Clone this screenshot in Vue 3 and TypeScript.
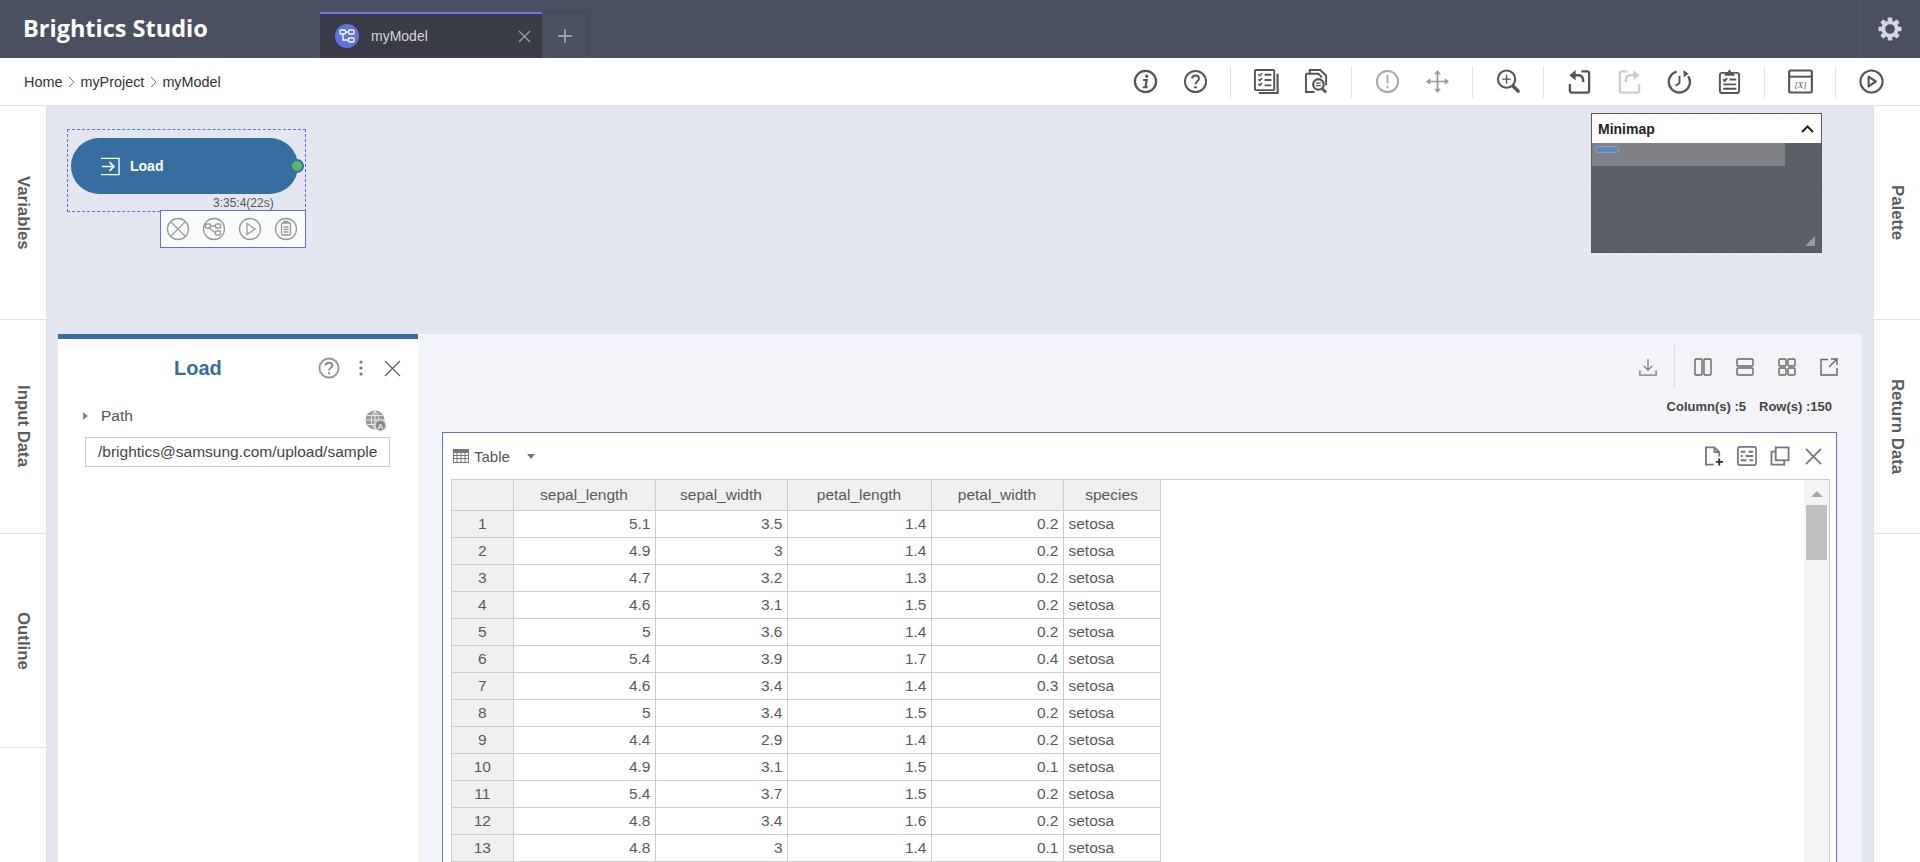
<script setup lang="ts">
const rows: [number, string, string, string, string][] = [
  [1, '5.1', '3.5', '1.4', '0.2'],
  [2, '4.9', '3', '1.4', '0.2'],
  [3, '4.7', '3.2', '1.3', '0.2'],
  [4, '4.6', '3.1', '1.5', '0.2'],
  [5, '5', '3.6', '1.4', '0.2'],
  [6, '5.4', '3.9', '1.7', '0.4'],
  [7, '4.6', '3.4', '1.4', '0.3'],
  [8, '5', '3.4', '1.5', '0.2'],
  [9, '4.4', '2.9', '1.4', '0.2'],
  [10, '4.9', '3.1', '1.5', '0.1'],
  [11, '5.4', '3.7', '1.5', '0.2'],
  [12, '4.8', '3.4', '1.6', '0.2'],
  [13, '4.8', '3', '1.4', '0.1'],
]
const cols = ['sepal_length', 'sepal_width', 'petal_length', 'petal_width', 'species']
const teeth = [0, 45, 90, 135, 180, 225, 270, 315]
</script>

<template>
  <div class="page">
    <header class="top">
      <div class="brand">Brightics Studio</div>
      <div class="tab">
        <span class="tab-ico">
          <svg width="18" height="18" viewBox="0 0 18 18" fill="none" stroke="#fff" stroke-width="1.3"><rect x="2" y="3" width="5.5" height="4" rx="1"/><rect x="10.5" y="3" width="5.5" height="4" rx="1"/><rect x="10.5" y="11" width="5.5" height="4" rx="1"/><path d="M7.5 5h3M5 7v6h5.5"/></svg>
        </span>
        <span class="tab-name">myModel</span>
        <svg class="tab-x" width="13" height="13" viewBox="0 0 14 14" stroke="#9a9da6" stroke-width="1.5"><path d="M1 1l12 12M13 1L1 13"/></svg>
      </div>
      <div class="tab-add">
        <svg width="14" height="14" viewBox="0 0 16 16" stroke="#9a9da6" stroke-width="2.2"><path d="M8 0v16M0 8h16"/></svg>
      </div>
      <div class="gear-box">
        <svg width="24" height="24" viewBox="0 0 24 24" fill="#d5d7db">
          <rect v-for="t in teeth" :key="t" x="9.700" y="0.500" width="4.600" height="5" rx="0.800" :transform="`rotate(${t} 12 12)`"/>
          <circle cx="12" cy="12" r="6.700" fill="none" stroke="#d5d7db" stroke-width="3.800"/>
        </svg>
      </div>
    </header>

    <div class="crumbbar">
      <div class="crumbs">
        <span>Home</span>
        <svg width="7" height="12" viewBox="0 0 7 12" fill="none" stroke="#777" stroke-width="1"><path d="M1 1l5 5-5 5"/></svg>
        <span>myProject</span>
        <svg width="7" height="12" viewBox="0 0 7 12" fill="none" stroke="#777" stroke-width="1"><path d="M1 1l5 5-5 5"/></svg>
        <span>myModel</span>
      </div>
      <div class="tools">
        <span class="ti"><svg viewBox="0 0 26 26" fill="none" stroke="#555" stroke-width="2.400"><circle cx="13" cy="13" r="11"/><circle cx="14.200" cy="7.500" r="1.700" fill="#555" stroke="none"/><path d="M10.500 11.500h3.800l-1.300 7h2.200M10 19h5" stroke-width="2.200"/></svg></span>
        <span class="ti"><svg viewBox="0 0 26 26" fill="none" stroke="#555" stroke-width="2"><circle cx="13" cy="13" r="11"/><path d="M9.500 10c0-2 1.600-3.300 3.600-3.300s3.500 1.300 3.500 3.200c0 2.800-3.600 2.800-3.600 6"/><circle cx="13" cy="19" r="1.300" fill="#555" stroke="none"/></svg></span>
        <i class="sep"></i>
        <span class="ti"><svg viewBox="0 0 26 26" fill="none" stroke="#555" stroke-width="2"><rect x="1" y="1" width="20" height="21" rx="1"/><path d="M24.500 5v20H5" stroke-width="2.200"/><path d="M4.500 5.500l1.500 1.500L8.500 4.500M4.500 10.500L6 12l2.500-2.500M4.500 15.500L6 17l2.500-2.500" stroke-width="1.600"/><path d="M11 6h7M11 11.500h7M11 17h7" stroke-width="2"/></svg></span>
        <span class="ti"><svg viewBox="0 0 26 26" fill="none" stroke="#555" stroke-width="2"><path d="M6 4.500V1h11l6 6v10"/><path d="M2 5h13l3 3v1M2 5v19h9"/><circle cx="15" cy="16" r="5.500" stroke-width="2.200"/><path d="M19 20.500l4 4" stroke-width="2.800"/><path d="M12.500 14.700h5M12.500 17.300h5" stroke-width="1.400"/></svg></span>
        <i class="sep"></i>
        <span class="ti"><svg viewBox="0 0 26 26" fill="none" stroke="#a8a8a8" stroke-width="2"><circle cx="13" cy="13" r="11"/><path d="M13 6v9M13 17.500v2.500"/></svg></span>
        <span class="ti"><svg viewBox="0 0 26 26" fill="#999" stroke="#999" stroke-width="1.800"><path d="M13 4v18M4 13h18" fill="none"/><path d="M13 1l3.500 4.500h-7zM13 25l3.500-4.500h-7zM1 13l4.500-3.500v7zM25 13l-4.500-3.500v7z" stroke="none"/></svg></span>
        <i class="sep"></i>
        <span class="ti"><svg viewBox="0 0 26 26" fill="none" stroke="#555" stroke-width="2.200"><circle cx="11" cy="10.500" r="9"/><path d="M11 6v9M6.500 10.500h9" stroke-width="1.500"/><path d="M18 18l5 5" stroke-width="3.600" stroke-linecap="round"/></svg></span>
        <i class="sep"></i>
        <span class="ti"><svg viewBox="0 0 26 26" fill="none" stroke="#555" stroke-width="2.400"><path d="M15 2.500h6a2 2 0 0 1 2 2v18a2 2 0 0 1-2 2H5a2 2 0 0 1-2-2v-7"/><path d="M8 6.500h4c3 0 5 2 5 7"/><path d="M9 1L2.500 6.500 9 12z" fill="#555" stroke="none"/></svg></span>
        <span class="ti"><svg viewBox="0 0 26 26" fill="none" stroke="#cdcdcd" stroke-width="2.400"><path d="M11 2.500H5a2 2 0 0 0-2 2v18a2 2 0 0 0 2 2h16a2 2 0 0 0 2-2v-7"/><path d="M18 6.500h-4c-3 0-5 2-5 7"/><path d="M17 1l6.500 5.500L17 12z" fill="#cdcdcd" stroke="none"/></svg></span>
        <span class="ti"><svg viewBox="0 0 26 26" fill="none" stroke="#555" stroke-width="2.400"><path d="M10 2.800a11 11 0 1 0 12 4.500"/><path d="M13 7v7.500l-4 3" stroke-width="2"/><path d="M17 1l5.500 4-5 3.500z" fill="#555" stroke="none"/></svg></span>
        <span class="ti"><svg viewBox="0 0 26 26" fill="none" stroke="#555" stroke-width="2"><path d="M8 4H4.500a2 2 0 0 0-1.500 2v17a2 2 0 0 0 1.500 2h17a2 2 0 0 0 1.500-2V6a2 2 0 0 0-1.500-2H18"/><path d="M8 3h3l2-2.500L15 3h3v4H8z" fill="#555" stroke="none"/><path d="M6.500 10.500l1.500 2 2.500-3M13 11h7M6.500 16h13.500M6.500 20.500h13.500"/></svg></span>
        <i class="sep"></i>
        <span class="ti"><svg viewBox="0 0 26 26" fill="none" stroke="#555" stroke-width="2.200"><rect x="1.200" y="1.500" width="23.600" height="23" rx="1.500"/><path d="M1 8h24" stroke-width="2"/><text x="13" y="20" font-size="9" font-style="italic" fill="#555" stroke="none" text-anchor="middle" font-family="Liberation Serif, serif">[X]</text></svg></span>
        <i class="sep"></i>
        <span class="ti"><svg viewBox="0 0 26 26" fill="none" stroke="#555" stroke-width="2.200"><circle cx="13" cy="13" r="11.500"/><path d="M10 8l7.500 5-7.500 5z" stroke-linejoin="round"/></svg></span>
      </div>
    </div>

    <div class="body">
      <aside class="rail left">
        <div class="rail-item"><span>Variables</span></div>
        <div class="rail-item"><span>Input Data</span></div>
        <div class="rail-item"><span>Outline</span></div>
      </aside>

      <main class="center">
        <section class="canvas">
          <div class="node-sel"></div>
          <div class="node">
            <svg width="20" height="19" viewBox="0 0 21 19" fill="none" stroke="#fff" stroke-width="1.400"><path d="M1 1h19v17H1"/><path d="M2 9.500h12M10 5l4.500 4.500L10 14" stroke-width="1.800"/></svg>
            <span>Load</span>
            <i class="port"></i>
          </div>
          <div class="node-time">3:35:4(22s)</div>
          <div class="node-tools">
            <svg viewBox="0 0 24 24" fill="none" stroke="#999" stroke-width="1.300"><circle cx="12" cy="12" r="10.500"/><path d="M5 5l14 14M19 5L5 19"/></svg>
            <svg viewBox="0 0 24 24" fill="none" stroke="#999" stroke-width="1.300"><circle cx="12" cy="12" r="10.500"/><rect x="3.500" y="7" width="5" height="4" rx="1"/><rect x="13.500" y="7" width="5" height="4" rx="1"/><rect x="13.500" y="14" width="5" height="4" rx="1"/><path d="M8.500 9h5M7 11l6.500 5"/></svg>
            <svg viewBox="0 0 24 24" fill="none" stroke="#999" stroke-width="1.300"><circle cx="12" cy="12" r="10.500"/><path d="M9 6.500l8 5.500-8 5.500z"/></svg>
            <svg viewBox="0 0 24 24" fill="none" stroke="#999" stroke-width="1.300"><circle cx="12" cy="12" r="10.500"/><rect x="7.500" y="6" width="9" height="12" rx="1"/><path d="M10 6V4.500h4V6M9.500 10h5M9.500 12.500h5M9.500 15h5"/></svg>
          </div>
          <div class="minimap">
            <div class="mm-head">
              <span>Minimap</span>
              <svg width="13" height="8" viewBox="0 0 13 8" fill="none" stroke="#222" stroke-width="2"><path d="M1 7l5.500-5.500L12 7"/></svg>
            </div>
            <div class="mm-body">
              <div class="mm-view"><i class="mm-node"></i></div>
              <svg class="mm-grip" width="10" height="10" viewBox="0 0 10 10"><path d="M10 0v10H0z" fill="#9b9ca1"/></svg>
            </div>
          </div>
        </section>

        <section class="work">
          <div class="props">
            <div class="props-head">
              <h2>Load</h2>
              <div class="props-actions">
                <svg width="22" height="22" viewBox="0 0 23 23" fill="none" stroke="#999" stroke-width="2"><circle cx="11.500" cy="11.500" r="10"/><path d="M8 9c0-2 1.500-3 3.500-3s3.500 1 3.500 3c0 2.500-3.500 2.500-3.500 5" stroke="#888"/><circle cx="11.500" cy="17" r="1.200" fill="#888" stroke="none"/></svg>
                <svg class="dots" width="4" height="16" viewBox="0 0 4 16" fill="#777"><circle cx="2" cy="2" r="1.600"/><circle cx="2" cy="8" r="1.600"/><circle cx="2" cy="14" r="1.600"/></svg>
                <svg class="pclose" width="17" height="17" viewBox="0 0 17 17" stroke="#666" stroke-width="1.400"><path d="M1 1l15 15M16 1L1 16"/></svg>
              </div>
            </div>
            <div class="path-row">
              <i class="caret"></i>
              <span>Path</span>
              <svg class="globe" width="22" height="22" viewBox="0 0 22 22" fill="none" stroke="#777" stroke-width="1.200"><circle cx="10" cy="10" r="9.500" fill="#999" stroke="none"/><path d="M1 10h18M10 1v18M2.500 5.500h15M2.500 14.500h15M10 1c-5 5-5 13 0 18M10 1c5 5 5 13 0 18" stroke="#eee" stroke-width="0.900"/><circle cx="15.500" cy="15.500" r="5.500" fill="#888" stroke="#ddd"/><text x="15.500" y="18.500" font-size="8" fill="#fff" stroke="none" text-anchor="middle" font-family="Liberation Sans, sans-serif">A</text></svg>
            </div>
            <div class="path-input"><span>/brightics@samsung.com/upload/sample</span></div>
          </div>

          <div class="results">
            <div class="res-tools">
              <svg width="18" height="18" viewBox="0 0 20 20" fill="none" stroke="#777" stroke-width="1.400"><path d="M10 1v12M5 8.500l5 5 5-5M1 14v5h18v-5"/></svg>
              <i class="res-sep"></i>
              <svg width="18" height="18" viewBox="0 0 18 18" fill="none" stroke="#666" stroke-width="1.400"><rect x="1" y="1" width="7" height="16" rx="1"/><rect x="10" y="1" width="7" height="16" rx="1"/></svg>
              <svg width="18" height="18" viewBox="0 0 18 18" fill="none" stroke="#666" stroke-width="1.400"><rect x="1" y="1" width="16" height="7" rx="1"/><rect x="1" y="10" width="16" height="7" rx="1"/></svg>
              <svg width="18" height="18" viewBox="0 0 18 18" fill="none" stroke="#666" stroke-width="1.400"><rect x="1" y="1" width="7" height="7" rx="1"/><rect x="10" y="1" width="7" height="7" rx="1"/><rect x="1" y="10" width="7" height="7" rx="1"/><rect x="10" y="10" width="7" height="7" rx="1"/></svg>
              <svg width="18" height="18" viewBox="0 0 18 18" fill="none" stroke="#666" stroke-width="1.400"><path d="M8 1.500H1V17h16v-7"/><path d="M9 9l8-8M11 1h6v6"/></svg>
            </div>
            <div class="res-meta"><span>Column(s) :5</span><span>Row(s) :150</span></div>
            <div class="grid-box">
              <div class="grid-head">
                <div class="grid-title">
                  <svg width="16" height="14" viewBox="0 0 16 14" fill="none" stroke="#777" stroke-width="1"><rect x=".5" y=".5" width="15" height="13"/><path d="M.5 3.500h15M.5 6.500h15M.5 9.500h15M4 3.500v10M8 3.500v10M12 3.500v10"/><rect x="0" y="0" width="16" height="3" fill="#777"/></svg>
                  <span>Table</span>
                  <i class="drop"></i>
                </div>
                <div class="grid-actions">
                  <svg width="20" height="20" viewBox="0 0 21 21" fill="none" stroke="#777" stroke-width="1.900"><path d="M10 19.500H2V1.500h9l5 5V11M11 1.500v5h5"/><path d="M16 13v7.500M12.500 16.700h7.500" stroke="#333" stroke-width="2"/></svg>
                  <svg width="20" height="20" viewBox="0 0 21 21" fill="none" stroke="#777" stroke-width="1.800"><rect x="1" y="1" width="19" height="19" rx="1.500"/><path d="M4 6h5M12 6h5M4 10.500h2M9 10.500h8M4 15h6M13 15h4" stroke-width="2"/></svg>
                  <svg width="20" height="20" viewBox="0 0 21 21" fill="none" stroke="#777" stroke-width="1.900"><rect x="6" y="1.500" width="13.500" height="13.500"/><path d="M6 6H1.500v13.500H15V15"/></svg>
                  <svg class="gclose" width="17" height="17" viewBox="0 0 18 18" stroke="#777" stroke-width="1.900"><path d="M1 1l16 16M17 1L1 17"/></svg>
                </div>
              </div>
              <div class="table-wrap">
                <table>
                  <thead>
                    <tr><th class="idx"></th><th v-for="c in cols" :key="c">{{ c }}</th></tr>
                  </thead>
                  <tbody>
                    <tr v-for="r in rows" :key="r[0]">
                      <td class="idx">{{ r[0] }}</td>
                      <td class="num">{{ r[1] }}</td>
                      <td class="num">{{ r[2] }}</td>
                      <td class="num">{{ r[3] }}</td>
                      <td class="num">{{ r[4] }}</td>
                      <td class="txt">setosa</td>
                    </tr>
                  </tbody>
                </table>
                <div class="sb">
                  <i class="sb-up"></i>
                  <i class="sb-thumb"></i>
                </div>
              </div>
            </div>
          </div>
        </section>
      </main>

      <aside class="rail right">
        <div class="rail-item"><span>Palette</span></div>
        <div class="rail-item"><span>Return Data</span></div>
      </aside>
    </div>
  </div>
</template>

<style>
html, body { margin: 0; overflow: hidden; background: #fff; }
</style>

<style scoped>
.page { width: 1920px; height: 862px; overflow: hidden; display: flex; flex-direction: column; font-family: "Liberation Sans", Arial, sans-serif; color: #333; }
.top { height: 58px; flex: none; background: #4a5060; display: flex; align-items: flex-end; position: relative; }
.brand { position: absolute; left: 23px; top: 13px; font-family: "Open Sans", sans-serif; font-weight: 700; font-size: 23.500px; line-height: 30px; color: #fff; }
.tab { margin-left: 320px; width: 222px; height: 46px; box-sizing: border-box; background: #393b46; border-top: 2px solid #6b7ce8; display: flex; align-items: center; padding-left: 15px; }
.tab-ico { width: 24px; height: 24px; border-radius: 50%; background: #6071e0; display: flex; align-items: center; justify-content: center; }
.tab-name { margin-left: 12px; font-size: 14px; color: #d6d8dd; flex: 1; }
.tab-x { margin-right: 11px; }
.tab-add { width: 46px; height: 46px; box-sizing: border-box; border: 1px solid #43475a; border-bottom: none; border-left: none; display: flex; align-items: center; justify-content: center; }
.gear-box { margin-left: auto; width: 61px; height: 58px; display: flex; align-items: center; justify-content: center; border-left: 1px solid #505666; box-sizing: border-box; }
.crumbbar { height: 48px; flex: none; background: #fff; border-bottom: 1px solid #dfe1e6; display: flex; align-items: center; justify-content: space-between; box-sizing: border-box; }
.crumbs { margin-left: 24px; display: flex; align-items: center; gap: 5.500px; font-size: 14.400px; color: #333; }
.tools { display: flex; align-items: center; margin-right: 24px; height: 32px; }
.ti { width: 50px; height: 25px; display: flex; justify-content: center; }
.ti svg { width: 25px; height: 25px; }
.sep { width: 1px; height: 32px; background: #e3e3e3; margin: 0 10px; }
.body { flex: 1; display: flex; min-height: 0; }
.rail { width: 47px; flex: none; background: #fff; border-right: 1px solid #dfe1e6; box-sizing: border-box; }
.rail.right { width: 47px; border-right: none; border-left: 1px solid #dfe1e6; }
.rail-item { height: 214px; box-sizing: border-box; border-bottom: 1px solid #dfe1e6; display: flex; align-items: center; justify-content: center; }
.rail-item span { writing-mode: vertical-rl; font-size: 16.800px; font-weight: 700; color: #5c5c5c; }
.center { flex: 1; min-width: 0; background: #e4e7f0; display: flex; flex-direction: column; position: relative; }
.canvas { height: 228px; flex: none; position: relative; }
.node-sel { position: absolute; left: 20px; top: 23px; width: 237px; height: 81px; border: 1px dashed #6270dc; }
.node { position: absolute; left: 24px; top: 32px; width: 227px; height: 56px; border-radius: 28px; background: #366e9f; display: flex; align-items: center; padding-left: 29px; box-sizing: border-box; color: #fff; font-weight: 700; font-size: 14px; gap: 10px; }
.port { position: absolute; right: -6px; top: 21px; width: 10px; height: 10px; border-radius: 50%; background: #5cb96b; border: 2px solid #366e9f; }
.node-time { position: absolute; left: 166px; top: 90px; font-size: 12px; line-height: 14px; color: #555; }
.node-tools { position: absolute; left: 113px; top: 104px; width: 146px; height: 38px; box-sizing: border-box; background: #fafbfd; border: 1px solid #6270dc; display: flex; align-items: center; gap: 12px; padding-left: 5px; }
.node-tools svg { width: 24px; height: 24px; }
.minimap { position: absolute; left: 1544px; top: 7px; width: 231px; height: 140px; box-sizing: border-box; border: 1px dashed #555; background: #5d5f67; display: flex; flex-direction: column; }
.mm-head { height: 29px; flex: none; background: #fff; display: flex; align-items: center; justify-content: space-between; padding: 0 7px 0 6px; font-size: 14px; font-weight: 700; color: #222; }
.mm-body { flex: 1; position: relative; }
.mm-view { width: 193px; height: 23px; background: #808186; position: relative; }
.mm-node { position: absolute; left: 3px; top: 3px; width: 24px; height: 7px; border-radius: 3px; background: #5d89b4; border: 1px solid #7fa5c9; box-sizing: border-box; }
.mm-grip { position: absolute; right: 6px; bottom: 6px; }
.work { flex: 1; display: flex; min-height: 0; margin-left: 11px; margin-right: 11px; }
.props { width: 360px; flex: none; background: #fff; border-top: 5px solid #366e9f; box-sizing: border-box; position: relative; }
.props-head { height: 58px; position: relative; display: flex; align-items: center; padding-left: 116px; }
.props-head h2 { margin: 0; font-size: 20px; font-weight: 700; color: #366e9f; }
.props-actions { position: absolute; left: 260px; top: 18px; display: flex; align-items: center; }
.dots { margin-left: 19px; }
.pclose { margin-left: 21px; }
.path-row { position: absolute; left: 25px; top: 68px; display: flex; align-items: center; font-size: 15.500px; color: #555; }
.path-row span { margin-left: 13px; }
.caret { width: 0; height: 0; border-left: 5px solid #888; border-top: 4px solid transparent; border-bottom: 4px solid transparent; }
.globe { position: absolute; left: 282px; top: 3px; }
.path-input { position: absolute; left: 27px; top: 98px; width: 305px; height: 30px; box-sizing: border-box; border: 1px solid #ccc; padding: 0 12px; font-size: 15.500px; line-height: 28px; color: #444; white-space: nowrap; }
.results { flex: 1; min-width: 0; background: #f3f4f7; display: flex; flex-direction: column; padding-left: 24px; }
.res-tools { height: 65px; flex: none; display: flex; align-items: center; justify-content: flex-end; padding-right: 24px; gap: 24px; }
.res-sep { width: 1px; height: 42px; background: #d8d9dd; margin: 0 -5px 0 -7px; }
.res-meta { height: 33px; flex: none; display: flex; justify-content: flex-end; gap: 13px; font-size: 13px; line-height: 16px; font-weight: 700; color: #444; padding-right: 30px; }
.grid-box { margin-right: 25px; flex: 1; background: #fff; border: 1px solid #6270dc; border-bottom: none; box-sizing: border-box; padding: 0 6px 0 8px; display: flex; flex-direction: column; min-height: 0; }
.grid-head { height: 46px; flex: none; display: flex; align-items: center; justify-content: space-between; padding: 0 8px 0 2px; }
.grid-title { display: flex; align-items: center; gap: 5px; font-size: 15px; color: #555; }
.drop { margin-left: 12px; width: 0; height: 0; border-top: 5px solid #777; border-left: 4px solid transparent; border-right: 4px solid transparent; }
.grid-actions { display: flex; align-items: center; gap: 13px; }
.gclose { margin-left: 2px; }
.table-wrap { flex: 1; border: 1px solid #ccc; border-bottom: none; position: relative; min-height: 0; overflow: hidden; background: #fff; }
table { border-collapse: collapse; table-layout: fixed; width: 708px; font-size: 15.500px; color: #5a5a5a; }
th, td { border: 1px solid #ccc; height: 27px; padding: 0 4px; box-sizing: border-box; white-space: nowrap; }
table tr th:first-child, table tr td:first-child { border-left: none; }
thead tr th { border-top: none; }
th { height: 30px; background: #f0f0f0; font-weight: 400; text-align: center; }
th:nth-child(1) { width: 61px; }
th:nth-child(2) { width: 142px; }
th:nth-child(3) { width: 132px; }
th:nth-child(4) { width: 144px; }
th:nth-child(5) { width: 132px; }
th:nth-child(6) { width: 97px; }
td.idx { background: #f0f0f0; text-align: center; }
td.num { text-align: right; }
td.txt { padding-left: 5px; }
.sb { position: absolute; right: 0; top: 0; bottom: 0; width: 25px; background: #f5f5f5; }
.sb-up { position: absolute; left: 7px; top: 11px; width: 0; height: 0; border-bottom: 6px solid #a8a8a8; border-left: 6px solid transparent; border-right: 6px solid transparent; }
.sb-thumb { position: absolute; left: 2px; top: 25px; width: 21px; height: 55px; background: #c0c0c0; }
</style>
